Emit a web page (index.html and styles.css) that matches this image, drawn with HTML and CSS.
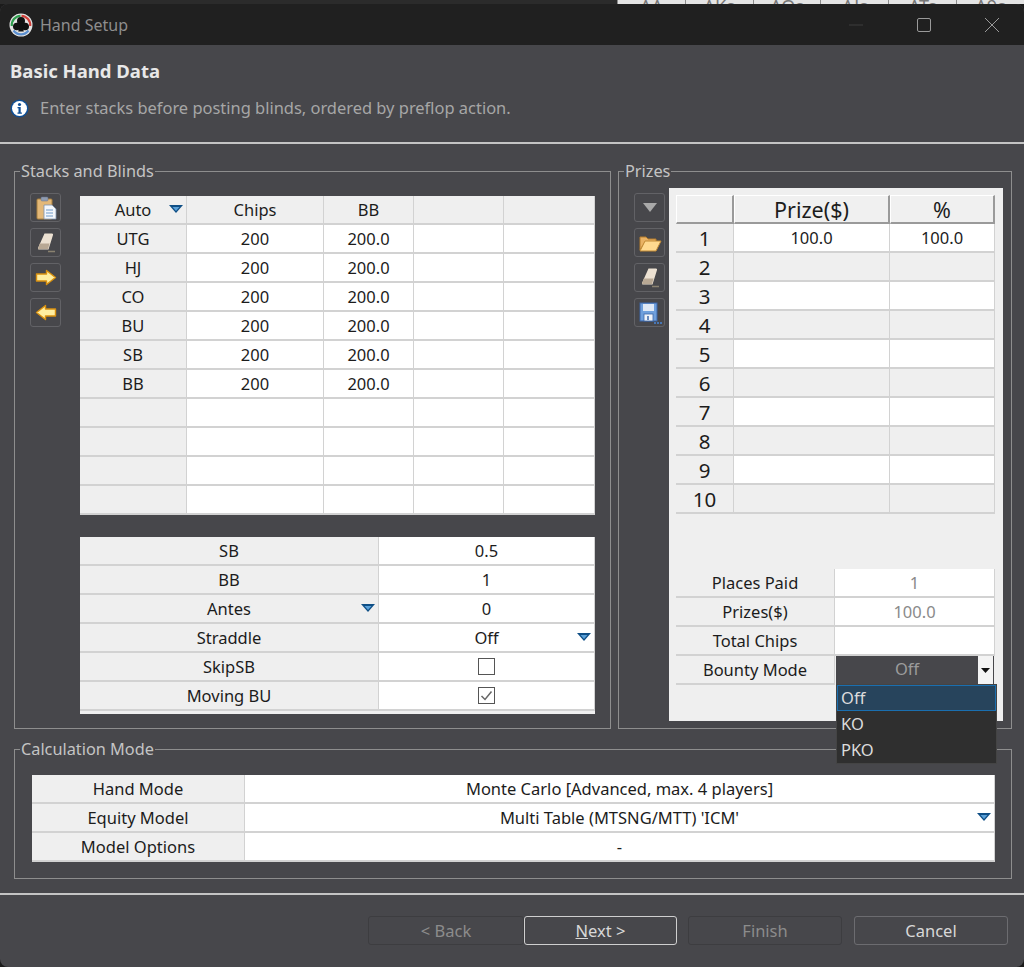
FILE: index.html
```html
<!DOCTYPE html>
<html lang="en">

<head>
	<meta charset="UTF-8">
	<title>Hand Setup</title>
	<link rel="stylesheet" href="styles.css">
</head>

<body>
	<div class="behind">
		<span>AA</span><span>AKs</span><span>AQs</span><span>AJs</span><span>ATs</span><span>A9s</span>
	</div>
	<div class="window">
		<div class="title-bar">
			<svg class="logo" width="24" height="24" viewBox="0 0 24 24">
				<circle cx="12" cy="12" r="11.500" fill="#e4e4e4" />
				<path d="M2.800 13a9.300 9.300 0 0 1 8.700-10.200" fill="none" stroke="#2f9d4e" stroke-width="2.200" />
				<path d="M12.500 2.800a9.300 9.300 0 0 1 8.700 10.200" fill="none" stroke="#d0403a" stroke-width="2.200" />
				<path d="M4.500 17.500a9.300 9.300 0 0 0 15 0" fill="none" stroke="#5b8fd0" stroke-width="2.200" />
				<circle cx="12" cy="8" r="4" fill="#111" />
				<circle cx="7.800" cy="13.500" r="3.800" fill="#111" />
				<circle cx="16.200" cy="13.500" r="3.800" fill="#111" />
				<path d="M11 11h2l1.800 7.500H9.200z" fill="#111" />
			</svg>
			<span class="title-text">Hand Setup</span>
			<div class="win-controls">
				<svg width="16" height="16" viewBox="0 0 16 16"><path d="M1 8h14" stroke="#3c3c3c" stroke-width="1" /></svg>
				<svg width="16" height="16" viewBox="0 0 16 16"><rect x="1.500" y="1.500" width="13" height="13" rx="1.500" fill="none" stroke="#9a9a9a" stroke-width="1" /></svg>
				<svg width="16" height="16" viewBox="0 0 16 16"><path d="M1 1l14 14M15 1L1 15" stroke="#9a9a9a" stroke-width="1" /></svg>
			</div>
		</div>

		<div class="page-head">
			<h1>Basic Hand Data</h1>
			<div class="hint">
				<svg width="19" height="19" viewBox="0 0 19 19">
					<circle cx="9.500" cy="9.500" r="9" fill="#0f4f96" />
					<circle cx="9.500" cy="9.500" r="7.500" fill="#fff" />
					<circle cx="9.500" cy="5.500" r="1.600" fill="#0f4f96" />
					<path d="M7.500 8h3.200v5.500h1.200v1.200H7.500v-1.200h1v-4.300h-1z" fill="#0f4f96" />
				</svg>
				<span>Enter stacks before posting blinds, ordered by preflop action.</span>
			</div>
		</div>

		<div class="content">
			<div class="top-groups">
				<fieldset class="group stacks">
					<legend>Stacks and Blinds</legend>
					<div class="tools">
						<button class="tool">
							<svg width="22" height="24" viewBox="0 0 22 24">
								<rect x="2" y="3" width="15" height="20" rx="1" fill="#e3b878" stroke="#a9803f" />
								<rect x="6" y="1" width="7" height="4" rx="1" fill="#8f9bb0" stroke="#66718a" stroke-width="0.500" />
								<path d="M9 9h8l4 4v10H9z" fill="#f4f7fb" stroke="#7f93ad" stroke-width="0.800" />
								<path d="M11 14h7M11 17h7M11 20h7" stroke="#6f9ac9" stroke-width="1" />
							</svg>
						</button>
						<button class="tool">
							<svg width="22" height="22" viewBox="0 0 22 22">
								<path d="M9.500 1.500h7.500q1.500 0 1 1.500l-4.500 14.500H4q-1.500 0-1-1.500z" fill="#ece1d2" />
								<path d="M3 17l1.800-5.500h9.800L13 17z" fill="#b8a894" />
								<path d="M13 19.500h7" stroke="#8a8270" stroke-width="1.500" />
							</svg>
						</button>
						<button class="tool">
							<svg width="22" height="17" viewBox="0 0 22 17">
								<path d="M1.500 5h10V1.500l9 7-9 7V12h-10z" fill="#ffeea0" stroke="#d8900f" stroke-width="1.400" stroke-linejoin="round" />
							</svg>
						</button>
						<button class="tool">
							<svg width="22" height="17" viewBox="0 0 22 17">
								<path d="M20.500 5h-10V1.500l-9 7 9 7V12h10z" fill="#ffeea0" stroke="#d8900f" stroke-width="1.400" stroke-linejoin="round" />
							</svg>
						</button>
					</div>
					<div class="tables">
						<div class="sheet stack-sheet">
							<div class="cell head marked">Auto<svg class="marker" width="14" height="8" viewBox="0 0 14 8"><path d="M0 0h14L7 8z" fill="#0f4f86" /><path d="M3.500 2h7L7 6z" fill="#5aa0d8" /></svg></div>
							<div class="cell head">Chips</div>
							<div class="cell head">BB</div>
							<div class="cell head"></div>
							<div class="cell head"></div>

							<div class="cell head">UTG</div><div class="cell">200</div><div class="cell">200.0</div><div class="cell"></div><div class="cell"></div>
							<div class="cell head">HJ</div><div class="cell">200</div><div class="cell">200.0</div><div class="cell"></div><div class="cell"></div>
							<div class="cell head">CO</div><div class="cell">200</div><div class="cell">200.0</div><div class="cell"></div><div class="cell"></div>
							<div class="cell head">BU</div><div class="cell">200</div><div class="cell">200.0</div><div class="cell"></div><div class="cell"></div>
							<div class="cell head">SB</div><div class="cell">200</div><div class="cell">200.0</div><div class="cell"></div><div class="cell"></div>
							<div class="cell head">BB</div><div class="cell">200</div><div class="cell">200.0</div><div class="cell"></div><div class="cell"></div>
							<div class="cell head"></div><div class="cell"></div><div class="cell"></div><div class="cell"></div><div class="cell"></div>
							<div class="cell head"></div><div class="cell"></div><div class="cell"></div><div class="cell"></div><div class="cell"></div>
							<div class="cell head"></div><div class="cell"></div><div class="cell"></div><div class="cell"></div><div class="cell"></div>
							<div class="cell head"></div><div class="cell"></div><div class="cell"></div><div class="cell"></div><div class="cell"></div>
						</div>

						<div class="sheet blinds-sheet">
							<div class="cell head">SB</div><div class="cell">0.5</div>
							<div class="cell head">BB</div><div class="cell">1</div>
							<div class="cell head marked">Antes<svg class="marker" width="14" height="8" viewBox="0 0 14 8"><path d="M0 0h14L7 8z" fill="#0f4f86" /><path d="M3.500 2h7L7 6z" fill="#5aa0d8" /></svg></div>
							<div class="cell">0</div>
							<div class="cell head">Straddle</div>
							<div class="cell marked">Off<svg class="marker" width="14" height="8" viewBox="0 0 14 8"><path d="M0 0h14L7 8z" fill="#0f4f86" /><path d="M3.500 2h7L7 6z" fill="#5aa0d8" /></svg></div>
							<div class="cell head">SkipSB</div><div class="cell"><span class="check"></span></div>
							<div class="cell head">Moving BU</div>
							<div class="cell">
								<span class="check"><svg width="15" height="15" viewBox="0 0 15 15"><path d="M2.500 8l3.500 3.500 6.500-8" fill="none" stroke="#666" stroke-width="1.500" /></svg></span>
							</div>
						</div>
					</div>
				</fieldset>

				<fieldset class="group prizes">
					<legend>Prizes</legend>
					<div class="tools">
						<button class="tool">
							<svg width="16" height="9" viewBox="0 0 16 9"><path d="M1 0h14L8 9z" fill="#a9a9a9" /></svg>
						</button>
						<button class="tool">
							<svg width="24" height="20" viewBox="0 0 24 20">
								<path d="M2 17V4h6l2 2h8v3H7z" fill="#e9b264" stroke="#b57d2c" />
								<path d="M2 18l5-10h16l-5 10z" fill="#ffd98f" stroke="#c28a35" stroke-linejoin="round" />
							</svg>
						</button>
						<button class="tool">
							<svg width="22" height="22" viewBox="0 0 22 22">
								<path d="M9.500 1.500h7.500q1.500 0 1 1.500l-4.500 14.500H4q-1.500 0-1-1.500z" fill="#ece1d2" />
								<path d="M3 17l1.800-5.500h9.800L13 17z" fill="#b8a894" />
								<path d="M13 19.500h7" stroke="#8a8270" stroke-width="1.500" />
							</svg>
						</button>
						<button class="tool">
							<svg width="24" height="24" viewBox="0 0 24 24">
								<rect x="2" y="2" width="17" height="18" fill="#6e9fdc" stroke="#3d67a8" />
								<rect x="5" y="3" width="11" height="7" fill="#dfe9f6" />
								<rect x="6" y="13" width="9" height="7" fill="#eef3fa" stroke="#3d67a8" stroke-width="0.800" />
								<path d="M10 15v4" stroke="#3d67a8" stroke-width="1.500" />
								<path d="M16 22h2M19 22h2M22 22h2" stroke="#4a86d8" stroke-width="1.500" />
							</svg>
						</button>
					</div>
					<div class="prize-panel">
						<div class="sheet prize-sheet">
							<div class="cell raised"></div><div class="cell raised">Prize($)</div><div class="cell raised">%</div>

							<div class="cell num">1</div><div class="cell">100.0</div><div class="cell">100.0</div>
							<div class="cell num">2</div><div class="cell alt"></div><div class="cell alt"></div>
							<div class="cell num">3</div><div class="cell"></div><div class="cell"></div>
							<div class="cell num">4</div><div class="cell alt"></div><div class="cell alt"></div>
							<div class="cell num">5</div><div class="cell"></div><div class="cell"></div>
							<div class="cell num">6</div><div class="cell alt"></div><div class="cell alt"></div>
							<div class="cell num">7</div><div class="cell"></div><div class="cell"></div>
							<div class="cell num">8</div><div class="cell alt"></div><div class="cell alt"></div>
							<div class="cell num">9</div><div class="cell"></div><div class="cell"></div>
							<div class="cell num">10</div><div class="cell alt"></div><div class="cell alt"></div>
						</div>

						<div class="sheet summary-sheet">
							<div class="cell head">Places Paid</div><div class="cell muted">1</div>
							<div class="cell head">Prizes($)</div><div class="cell muted">100.0</div>
							<div class="cell head">Total Chips</div><div class="cell"></div>
							<div class="cell head">Bounty Mode</div>
							<div class="combo">
								<span class="combo-value">Off</span>
								<span class="combo-btn"><svg width="9" height="5" viewBox="0 0 9 5"><path d="M0 0h9L4.500 5z" fill="#111" /></svg></span>
								<ul class="combo-list">
									<li class="selected">Off</li>
									<li>KO</li>
									<li>PKO</li>
								</ul>
							</div>
						</div>
					</div>
				</fieldset>
			</div>

			<fieldset class="group calc">
				<legend>Calculation Mode</legend>
				<div class="sheet calc-sheet">
					<div class="cell head">Hand Mode</div><div class="cell">Monte Carlo [Advanced, max. 4 players]</div>
					<div class="cell head">Equity Model</div>
					<div class="cell marked">Multi Table (MTSNG/MTT) 'ICM'<svg class="marker" width="14" height="8" viewBox="0 0 14 8"><path d="M0 0h14L7 8z" fill="#0f4f86" /><path d="M3.500 2h7L7 6z" fill="#5aa0d8" /></svg></div>
					<div class="cell head">Model Options</div><div class="cell">-</div>
				</div>
			</fieldset>
		</div>

		<div class="footer">
			<button class="button off back">&lt; Back</button>
			<button class="button default"><u>N</u>ext &gt;</button>
			<button class="button off">Finish</button>
			<button class="button">Cancel</button>
		</div>
	</div>
</body>

</html>
```

FILE: styles.css
```css
* {
	box-sizing: border-box;
}

html {
	background: #1b1b1b;
}

body {
	margin: 0;
	padding: 0;
	width: 1024px;
	height: 967px;
	overflow: hidden;
	font-family: "Noto Sans", "Open Sans", sans-serif;
	font-size: 16.500px;
	color: #1c1c1c;
}

.behind {
	height: 4px;
	overflow: hidden;
	display: flex;
	padding-left: 617px;
	background: #2b2b2b;
}

.behind span {
	width: 74px;
	height: 4px;
	background: #e4e4e4;
	border-left: 1px solid #8c8c8c;
	text-align: center;
	font-size: 18px;
	line-height: 12px;
	color: #777;
}

.window {
	height: 963px;
	background: #47474b;
	border-radius: 8px;
	overflow: hidden;
}

.title-bar {
	height: 41px;
	background: #202020;
	display: flex;
	align-items: center;
	padding-left: 9px;
}

.logo {
	margin-right: 7px;
}

.title-text {
	color: #8e8e8e;
	font-size: 16px;
}

.win-controls {
	margin-left: auto;
	display: flex;
	gap: 52px;
	padding-right: 24px;
}

.page-head {
	height: 99px;
	border-bottom: 2px solid #c4c4c4;
	padding: 14px 10px 0;
}

.page-head h1 {
	margin: 0;
	font-size: 18.500px;
	line-height: 24px;
	font-weight: 700;
	color: #e8e8e8;
}

.hint {
	display: flex;
	align-items: center;
	gap: 11px;
	margin-top: 14px;
	color: #a6a6a6;
	font-size: 16.450px;
	line-height: 22px;
}

.content {
	padding: 16px 12px 0 14px;
}

.top-groups {
	display: flex;
	gap: 7px;
	margin-bottom: 9px;
}

.group {
	margin: 0;
	min-width: 0;
	border: 1px solid #8e8e8e;
	display: flex;
	color: #c6c6c6;
}

.group legend {
	margin-left: -10px;
	padding: 0 1px;
	font-size: 16.300px;
	line-height: 22px;
	color: #c4c4c4;
}

.stacks {
	width: 597px;
	height: 569px;
	padding: 10px 15px 0 15px;
}

.prizes {
	width: 394px;
	height: 569px;
	padding: 10px 8px 0 15px;
}

.calc legend {
	margin-left: -12px;
}

.tools {
	width: 31px;
	display: flex;
	flex-direction: column;
	gap: 6px;
	padding-top: 1px;
}

.tool {
	width: 31px;
	height: 29px;
	padding: 0;
	background: transparent;
	border: 1px solid #626266;
	border-radius: 3px;
	display: flex;
	align-items: center;
	justify-content: center;
}

.tables {
	margin-left: 19px;
	width: 515px;
	padding-top: 4px;
}

.sheet {
	display: grid;
	grid-auto-rows: 29px;
}

.cell {
	position: relative;
	display: flex;
	align-items: center;
	justify-content: center;
	background: #fff;
	border-right: 1px solid #d2d2d2;
	border-bottom: 2px solid #d2d2d2;
	color: #1c1c1c;
}

.cell.head {
	background: #efefef;
}

.marker {
	position: absolute;
	right: 3px;
	top: 9px;
}

.stack-sheet {
	grid-template-columns: 107px 137px 90px 90px 91px;
}

.blinds-sheet {
	margin-top: 22px;
	height: 177px;
	background: #efefef;
	grid-template-columns: 299px 216px;
}

.check {
	width: 17px;
	height: 17px;
	background: #fff;
	border: 1.500px solid #555;
	display: flex;
	align-items: center;
	justify-content: center;
}

.prize-panel {
	width: 334px;
	height: 533px;
	margin-left: 4px;
	margin-top: -4px;
	padding: 7px 8px 0 7px;
	background: #efefef;
}

.prize-sheet {
	grid-template-columns: 58px 156px 105px;
}

.cell.raised {
	background: #f0f0f0;
	border: 1px solid #fff;
	border-right: 2px solid #9a9a9a;
	border-bottom: 2px solid #9a9a9a;
	font-size: 21.500px;
}

.cell.num {
	background: #efefef;
	font-size: 20.500px;
}

.cell.alt {
	background: #efefef;
}

.summary-sheet {
	margin-top: 55px;
	grid-template-columns: 159px 160px;
}

.cell.muted {
	color: #8a8a8a;
}

.combo {
	position: relative;
	display: flex;
	height: 28px;
	margin: 0 1px;
	background: #47474b;
}

.combo-value {
	flex: 1;
	text-align: center;
	line-height: 26px;
	color: #9c9c9c;
}

.combo-btn {
	width: 15px;
	margin-right: 1px;
	background: #f4f4f4;
	display: flex;
	align-items: center;
	justify-content: center;
}

.combo-list {
	position: absolute;
	left: 0;
	top: 28px;
	width: 161px;
	margin: 0;
	padding: 0;
	list-style: none;
	background: #2f2f2f;
	border: 1px solid #444;
	color: #dcdcdc;
	z-index: 2;
}

.combo-list li {
	height: 26px;
	line-height: 25px;
	padding-left: 4px;
}

.combo-list .selected {
	background: #27445c;
	outline: 1px solid #1a6fb0;
	outline-offset: -1px;
}

.calc {
	width: 998px;
	height: 141px;
	padding: 15px 16px 0 17px;
}

.calc-sheet {
	width: 963px;
	grid-template-columns: 213px 750px;
}

.footer {
	height: 74px;
	margin-top: 14px;
	border-top: 2px solid #c4c4c4;
	padding: 21px 16px 0 0;
	display: flex;
	justify-content: flex-end;
	align-items: flex-start;
	gap: 12px;
}

.button {
	width: 154px;
	height: 29px;
	padding: 0;
	background: transparent;
	border: 1px solid #6c6c70;
	border-radius: 3px;
	color: #d8d8d8;
	font-family: inherit;
	font-size: 16.500px;
}

.button.off {
	border-color: #3d3d40;
	color: #8c8c8c;
}

.button.default {
	width: 153px;
	border-color: #cfcfcf;
	margin-right: -1px;
}

.button.back {
	width: 156px;
	margin-right: -12px;
}
```
